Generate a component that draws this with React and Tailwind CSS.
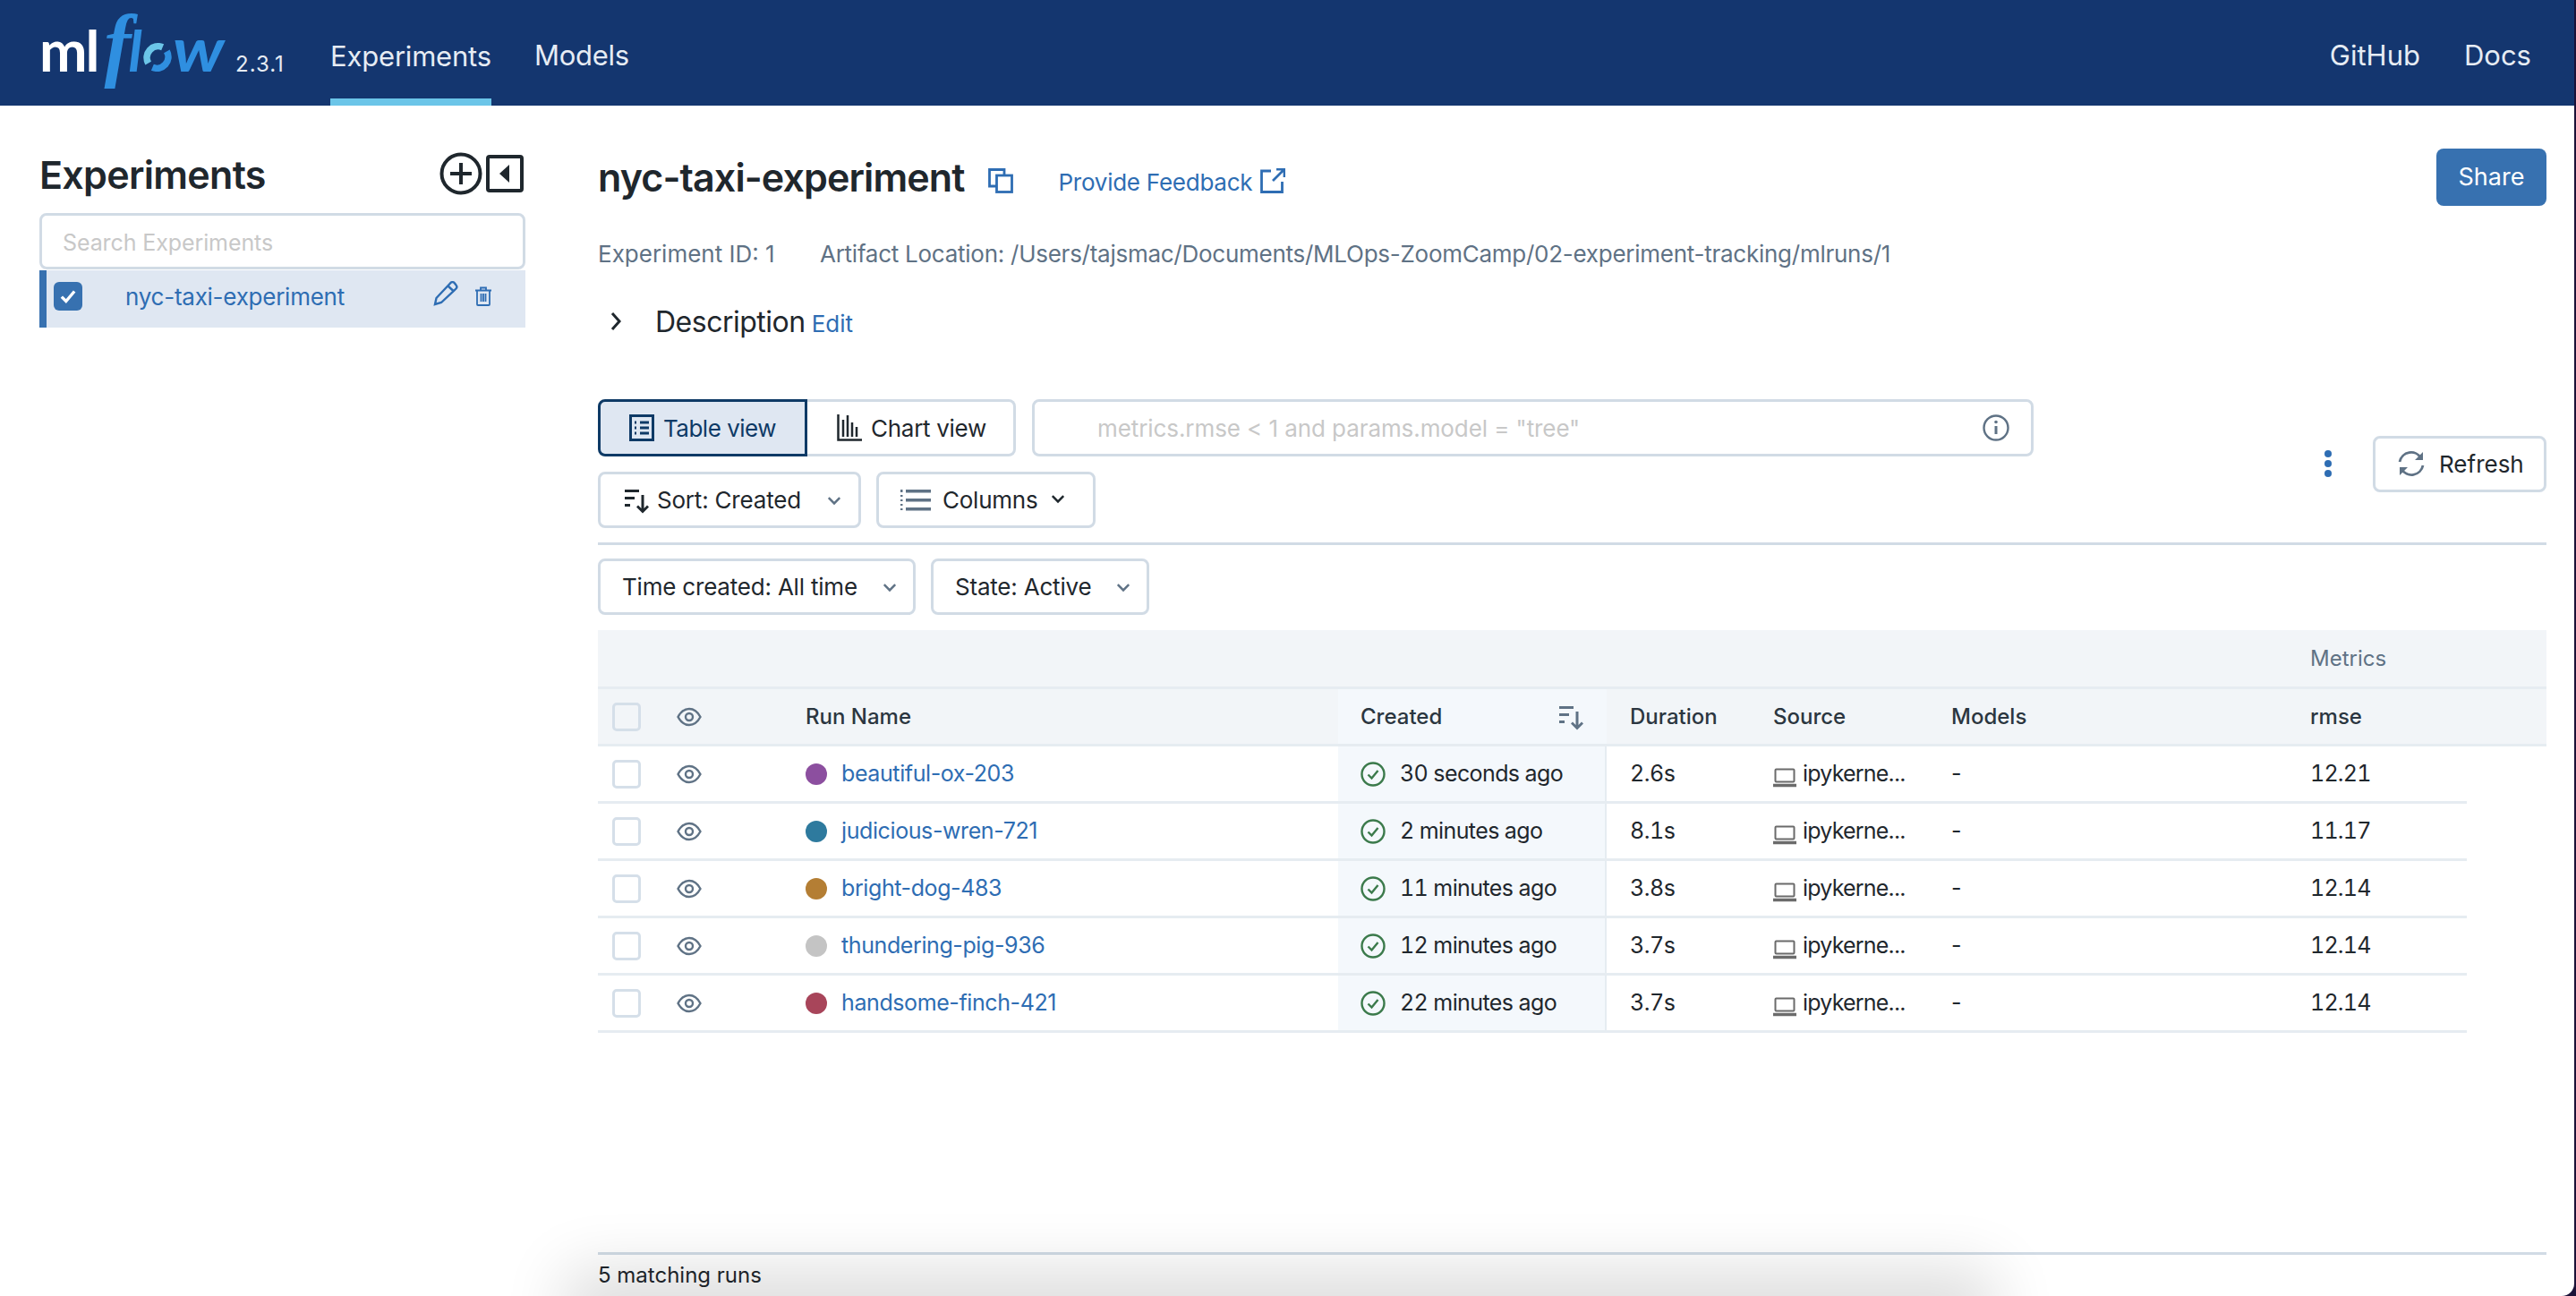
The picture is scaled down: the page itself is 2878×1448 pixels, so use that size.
import React from 'react';

const RUNS = [
  { name: 'beautiful-ox-203', color: 'bg-[#8c4f9f]', ago: '30 seconds ago', dur: '2.6s', rmse: '12.21' },
  { name: 'judicious-wren-721', color: 'bg-[#2e7a9e]', ago: '2 minutes ago', dur: '8.1s', rmse: '11.17' },
  { name: 'bright-dog-483', color: 'bg-[#b47e34]', ago: '11 minutes ago', dur: '3.8s', rmse: '12.14' },
  { name: 'thundering-pig-936', color: 'bg-[#c4c4c4]', ago: '12 minutes ago', dur: '3.7s', rmse: '12.14' },
  { name: 'handsome-finch-421', color: 'bg-[#a8455a]', ago: '22 minutes ago', dur: '3.7s', rmse: '12.14' },
];

const Chevron = ({ className = 'w-[16px] h-[16px] text-[#5f7285]' }) => (
  <svg viewBox="0 0 16 16" fill="none" stroke="currentColor" strokeWidth="2.2" className={className}>
    <path d="M2.5 5.5 8 11l5.5-5.5" />
  </svg>
);

const SortIcon = ({ className, color = 'currentColor' }) => (
  <svg viewBox="0 0 30 30" className={className} fill={color}>
    <rect x="1" y="3" width="16" height="3" />
    <rect x="1" y="11" width="11" height="3" />
    <rect x="1" y="19" width="6" height="3" />
    <path d="M19.5 9h3v15l3.5-3.5 2 2-7 7-7-7 2-2 3.500 3.500z" />
  </svg>
);

const Eye = () => (
  <svg viewBox="0 0 28 22" className="w-[28px] h-[22px] text-[#5f7285]" fill="none" stroke="currentColor" strokeWidth="2.400">
    <path d="M1.500 11C5 4.500 9 2 14 2s9 2.500 12.500 9C23 17.500 19 20 14 20S5 17.500 1.500 11z" />
    <circle cx="14" cy="11" r="4" />
  </svg>
);

const Box = ({ head }) => (
  <div className={`w-[32px] h-[32px] rounded-[5px] border-[3px] border-[#d5dfe9] ${head ? 'bg-[#f2f5f8]' : 'bg-white'}`} />
);

const Status = () => (
  <svg viewBox="0 0 28 28" className="w-[28px] h-[28px] shrink-0 text-[#3b7a4b]" fill="none" stroke="currentColor" strokeWidth="2.400">
    <circle cx="14" cy="14" r="12.500" />
    <path d="M8.500 14.500 12.500 18.500 19.500 10" />
  </svg>
);

const Laptop = () => (
  <svg viewBox="0 0 26 22" className="w-[26px] h-[22px] mt-[8px] shrink-0 text-[#6b6b6b]" fill="none" stroke="currentColor" strokeWidth="2">
    <rect x="2.500" y="1.500" width="21" height="14" rx="1" />
    <path d="M0 19.500h26" strokeWidth="3.500" />
  </svg>
);

const Logo = () => (
  <div className="flex items-baseline -mt-[18px] select-none">
    <div className="w-[219px] shrink-0 flex items-baseline font-['Lato',sans-serif] text-[#2f8fe0]">
      <span className="text-[64px] leading-none font-bold text-white tracking-[-2px]">ml</span>
      <span className="text-[90px] leading-none italic font-bold font-['Liberation_Serif',serif] ml-[7px] mr-[-3px]">f</span>
      <span className="text-[64px] leading-none italic font-bold">l</span>
      <svg viewBox="0 0 34 34" className="w-[32px] h-[32px] mx-[1px]" fill="none" strokeWidth="8">
        <path d="M6 24A13.500 13.500 0 0 1 23 5" stroke="#6bc5e8" />
        <path d="M28 10A13.500 13.500 0 0 1 11 29" stroke="#2f8fe0" />
      </svg>
      <span className="text-[68px] leading-none italic font-bold inline-block scale-x-[1.15] origin-left">w</span>
    </div>
    <span className="text-[24px] tracking-[1px] text-[#e6ecf4]">2.3.1</span>
  </div>
);

const Btn = ({ className = '', children }) => (
  <div className={`h-[63px] flex items-center rounded-[8px] border-[3px] border-[#d1dbe5] bg-white text-[26px] text-[#1f272d] ${className}`}>
    {children}
  </div>
);

export default function App() {
  return (
    <div className="w-[2878px] h-[1448px] overflow-hidden bg-[#1b1238] font-['Inter',sans-serif]">
      <div className="relative w-[2876px] h-[1448px] flex flex-col overflow-hidden bg-white rounded-br-[14px]">
        {/* top bar */}
        <header className="h-[118px] shrink-0 flex items-stretch bg-[#14366f] pl-[44px] pr-[48px] text-[#e6ecf4] text-[31px]">
          <div className="flex items-center w-[325px]">
            <Logo />
          </div>
          <a className="flex items-center w-[180px] justify-center border-b-[8px] border-[#6bc5e8] pt-[16px] mr-[48px] -tracking-[0.2px]">Experiments</a>
          <a className="flex items-center pt-[6px] -tracking-[0.3px]">Models</a>
          <a className="flex items-center pt-[6px] ml-auto mr-[49px]">GitHub</a>
          <a className="flex items-center pt-[6px]">Docs</a>
        </header>

        <div className="flex-1 flex min-h-0">
          {/* sidebar */}
          <aside className="w-[543px] ml-[44px] shrink-0 pt-[52px]">
            <div className="flex items-center justify-between h-[48px] mb-[20px]">
              <h1 className="text-[43px] mt-[2px] font-semibold text-[#1f272d] -tracking-[0.7px]">Experiments</h1>
              <div className="flex items-center gap-[4px] mr-[2px] text-[#1f272d]">
                <svg viewBox="0 0 48 48" className="w-[48px] h-[48px]" fill="none" stroke="currentColor" strokeWidth="4">
                  <circle cx="24" cy="24" r="21.500" />
                  <path d="M24 12v24M12 24h24" />
                </svg>
                <svg viewBox="0 0 42 42" className="w-[42px] h-[42px]" fill="currentColor">
                  <rect x="2" y="2" width="38" height="38" rx="2" fill="none" stroke="currentColor" strokeWidth="4" />
                  <path d="M26 11v20L15 21z" />
                </svg>
              </div>
            </div>
            <input
              placeholder="Search Experiments"
              className="block w-full h-[63px] rounded-[8px] border-[3px] border-[#d1dbe5] px-[23px] pt-[2px] text-[25px] -tracking-[0.1px] outline-none placeholder:text-[#c8c8c8]"
            />
            <div className="mt-[1px] h-[64px] flex items-center bg-[#dfe7f2] border-l-[8px] border-[#3771b0] pl-[8px] pr-[37px] pb-[6px] text-[#2e6db3]">
              <div className="w-[32px] h-[32px] rounded-[6px] bg-[#3771b0] flex items-center justify-center">
                <svg viewBox="0 0 20 20" className="w-[22px] h-[22px]" fill="none" stroke="white" strokeWidth="3">
                  <path d="M3.500 10.500 8 15l8.500-10" />
                </svg>
              </div>
              <span className="ml-[48px] text-[26px] -tracking-[0.25px]">nyc-taxi-experiment</span>
              <svg viewBox="0 0 28 28" className="w-[28px] h-[28px] ml-auto mb-[6px]" fill="none" stroke="currentColor" strokeWidth="2.400">
                <path d="M2 26l1.500-7L19 2.500a3 3 0 0 1 5 0l1.500 2a3 3 0 0 1 0 4L9 24z" />
                <path d="M16.500 5.500l6.500 6" />
              </svg>
              <svg viewBox="0 0 20 22" className="w-[20px] h-[22px] ml-[18px]" fill="none" stroke="currentColor" strokeWidth="1.800">
                <path d="M1 4.500h18M7 4.500V1.500h6v3M3 4.500V20a1 1 0 0 0 1 1h12a1 1 0 0 0 1-1V4.500M7.500 8v9M10 8v9M12.500 8v9" />
              </svg>
            </div>
          </aside>

          {/* main */}
          <main className="ml-[81px] w-[2177px] shrink-0 pt-[48px] flex flex-col">
            <div className="flex items-start h-[64px]">
              <h2 className="text-[43px] leading-[64px] font-semibold text-[#1f272d] -tracking-[0.9px]">nyc-taxi-experiment</h2>
              <svg viewBox="0 0 28 28" className="w-[28px] h-[28px] ml-[27px] mt-[22px] text-[#2e6db3]" fill="none" stroke="currentColor" strokeWidth="2.800">
                <path d="M18 7V1.500H1.500V20H9" />
                <rect x="9.500" y="8" width="17" height="18.500" />
              </svg>
              <a className="ml-[50px] mt-[20px] text-[26px] leading-[36px] text-[#2e6db3] -tracking-[0.25px]">Provide Feedback</a>
              <svg viewBox="0 0 28 28" className="w-[28px] h-[28px] ml-[9px] mt-[22px] text-[#2e6db3]" fill="none" stroke="currentColor" strokeWidth="2.800">
                <path d="M12 3H1.500v23.500h23V15M14 14 27 1M18 1h9v9" />
              </svg>
              <button className="ml-auto w-[123px] h-[64px] rounded-[8px] bg-[#3771b0] text-white text-[27px]">Share</button>
            </div>

            <div className="mt-[37px] h-[32px] flex items-center text-[26px] text-[#5f7285]">
              <span className="w-[248px]">Experiment ID: 1</span>
              <span className="-tracking-[0.26px]">Artifact Location: /Users/tajsmac/Documents/MLOps-ZoomCamp/02-experiment-tracking/mlruns/1</span>
            </div>

            <div className="mt-[41px] h-[40px] flex items-center">
              <svg viewBox="0 0 14 22" className="w-[14px] h-[22px] ml-[13px] mb-[2px] text-[#1f272d]" fill="none" stroke="currentColor" strokeWidth="3">
                <path d="M3 2l8 9-8 9" />
              </svg>
              <span className="ml-[37px] text-[32px] text-[#1f272d] -tracking-[0.5px]">Description</span>
              <a className="ml-[7px] text-[26px] text-[#2e6db3] mt-[2px]">Edit</a>
            </div>

            {/* toolbar */}
            <div className="mt-[66px] flex items-center">
              <div className="w-[1604px] flex flex-col gap-[17px]">
                <div className="flex gap-[18px] h-[64px]">
                  <div className="flex">
                    <div className="w-[234px] h-[64px] flex items-center justify-center gap-[10px] rounded-l-[8px] border-[3px] border-[#0e3a66] bg-[#dfe7f2] text-[26px] text-[#0e3a66] -tracking-[0.5px]">
                      <svg viewBox="0 0 28 30" className="w-[28px] h-[30px]" fill="none" stroke="currentColor" strokeWidth="3">
                        <rect x="1.500" y="1.500" width="25" height="27" />
                        <path d="M12 9h10M12 15h10M12 21h10M6 9h2M6 15h2M6 21h2" />
                      </svg>
                      Table view
                    </div>
                    <div className="w-[233px] h-[64px] flex items-center justify-center gap-[10px] pl-[3px] rounded-r-[8px] border-[3px] border-l-0 border-[#d1dbe5] text-[26px] text-[#1f272d] -tracking-[0.3px]">
                      <svg viewBox="0 0 28 30" className="w-[28px] h-[30px]" fill="none" stroke="currentColor" strokeWidth="2.500">
                        <path d="M1.500 0v28.500H28M7 6v19M12 1v24M17 9v16M22 14v11" />
                      </svg>
                      Chart view
                    </div>
                  </div>
                  <div className="w-[1119px] flex items-center rounded-[8px] border-[3px] border-[#d1dbe5] pl-[70px] pr-[24px] text-[26px] text-[#c8c8c8] -tracking-[0.08px]">
                    <span>metrics.rmse &lt; 1 and params.model = "tree"</span>
                    <svg viewBox="0 0 30 30" className="w-[30px] h-[30px] ml-auto text-[#5f7285]" fill="none" stroke="currentColor" strokeWidth="2.400">
                      <circle cx="15" cy="15" r="13.500" />
                      <path d="M15 13v9" strokeWidth="3" />
                      <circle cx="15" cy="8.500" r="1.800" fill="currentColor" stroke="none" />
                    </svg>
                  </div>
                </div>
                <div className="flex gap-[17px]">
                  <Btn className="w-[294px] pl-[26px]">
                    <SortIcon className="w-[30px] h-[30px] text-[#1f272d] mr-[7px]" />
                    <span className="-tracking-[0.2px]">Sort: Created</span>
                    <Chevron className="w-[18px] h-[18px] text-[#5f7285] ml-[28px]" />
                  </Btn>
                  <Btn className="w-[245px] pl-[24px]">
                    <svg viewBox="0 0 34 26" className="w-[34px] h-[26px] text-[#5f7285] mr-[13px]" fill="currentColor">
                      <rect x="6" y="1" width="28" height="3.500" />
                      <rect x="6" y="11" width="28" height="3.500" />
                      <rect x="6" y="21" width="28" height="3.500" />
                      <rect x="0" y="1" width="2.500" height="3" />
                      <rect x="0" y="7" width="2.500" height="2" />
                      <rect x="0" y="12" width="2.500" height="2" />
                      <rect x="0" y="17" width="2.500" height="2" />
                      <rect x="0" y="22" width="2.500" height="2" />
                    </svg>
                    <span className="-tracking-[0.25px]">Columns</span>
                    <Chevron className="w-[18px] h-[18px] text-[#1f272d] ml-[14px] mb-[4px]" />
                  </Btn>
                </div>
              </div>
              <div className="ml-auto flex items-center">
                <div className="flex flex-col gap-[3px] mr-[46px]">
                  <span className="w-[8px] h-[8px] rounded-full bg-[#2e6db3]" />
                  <span className="w-[8px] h-[8px] rounded-full bg-[#2e6db3]" />
                  <span className="w-[8px] h-[8px] rounded-full bg-[#2e6db3]" />
                </div>
                <Btn className="w-[194px] pl-[25px]">
                  <svg viewBox="0 0 30 30" className="w-[30px] h-[30px] text-[#5f7285] mr-[16px]" fill="none" stroke="currentColor" strokeWidth="2.800">
                    <path d="M2 13A13 13 0 0 1 26 9M28 17A13 13 0 0 1 4 21" />
                    <path d="M28 2v9h-9zM2 28v-9h9z" fill="currentColor" stroke="none" />
                  </svg>
                  Refresh
                </Btn>
              </div>
            </div>

            <div className="mt-[16px] border-t-[3px] border-[#d1dbe5]" />

            <div className="mt-[15px] flex gap-[17px]">
              <Btn className="w-[355px] pl-[24px]">
                <span className="-tracking-[0.2px]">Time created: All time</span>
                <Chevron className="w-[18px] h-[18px] text-[#5f7285] ml-[27px]" />
              </Btn>
              <Btn className="w-[244px] pl-[24px]">
                <span className="-tracking-[0.2px]">State: Active</span>
                <Chevron className="w-[18px] h-[18px] text-[#5f7285] ml-[27px]" />
              </Btn>
            </div>

            {/* runs table */}
            <div className="mt-[17px] text-[26px] text-[#1f272d]">
              <div className="h-[66px] bg-[#f2f5f8] border-b-[3px] border-[#e6ecf1] flex items-center">
                <span className="ml-[1913px] text-[24px] text-[#5f7285]">Metrics</span>
              </div>
              <div className="h-[64px] bg-[#f2f5f8] border-b-[3px] border-[#e6ecf1] flex items-stretch font-medium text-[24px] text-[#2b3640]">
                <div className="w-[88px] pl-[16px] flex items-center"><Box head /></div>
                <div className="w-[144px] flex items-center"><Eye /></div>
                <div className="w-[595px] flex items-center">Run Name</div>
                <div className="w-[300px] flex items-center justify-between pl-[25px] pr-[24px] bg-[#f4f8fc]">
                  Created
                  <SortIcon className="w-[30px] h-[30px] text-[#5f7285]" />
                </div>
                <div className="w-[186px] pl-[26px] flex items-center">Duration</div>
                <div className="w-[199px] flex items-center">Source</div>
                <div className="w-[401px] flex items-center">Models</div>
                <div className="flex items-center">rmse</div>
              </div>
              {RUNS.map((run) => (
                <div key={run.name} className="w-[2088px] h-[64px] border-b-[3px] border-[#e6ecf1] flex items-stretch text-[25px]">
                  <div className="w-[88px] pl-[16px] flex items-center"><Box /></div>
                  <div className="w-[144px] flex items-center"><Eye /></div>
                  <div className="w-[595px] flex items-center">
                    <span className={`w-[24px] h-[24px] rounded-full ${run.color}`} />
                    <a className="ml-[16px] text-[#2e6db3] -tracking-[0.4px]">{run.name}</a>
                  </div>
                  <div className="w-[300px] flex items-center pl-[25px] gap-[16px] tabular-nums bg-[#f4f8fc] border-r-[2px] border-[#e6ecf1] -tracking-[0.6px]">
                    <Status />
                    {run.ago}
                  </div>
                  <div className="w-[186px] pl-[26px] flex items-center tabular-nums -tracking-[0.5px]">{run.dur}</div>
                  <div className="w-[199px] flex items-center gap-[7px]">
                    <Laptop />
                    <span className="-tracking-[0.8px]">ipykerne...</span>
                  </div>
                  <div className="w-[401px] flex items-center">-</div>
                  <div className="flex items-center tabular-nums -tracking-[0.8px]">{run.rmse}</div>
                </div>
              ))}
            </div>

            <div className="mt-auto h-[49px] border-t-[3px] border-[#d1dbe5] flex items-center text-[24px] text-[#1f272d]">
              5 matching runs
            </div>
          </main>
        </div>

        {/* shadow of the desktop dock along the lower edge */}
        <div className="absolute left-[660px] bottom-[-30px] w-[1540px] h-[30px] bg-black/10 shadow-[0_0_70px_28px_rgba(0,0,0,0.14)] pointer-events-none" />
      </div>
    </div>
  );
}
